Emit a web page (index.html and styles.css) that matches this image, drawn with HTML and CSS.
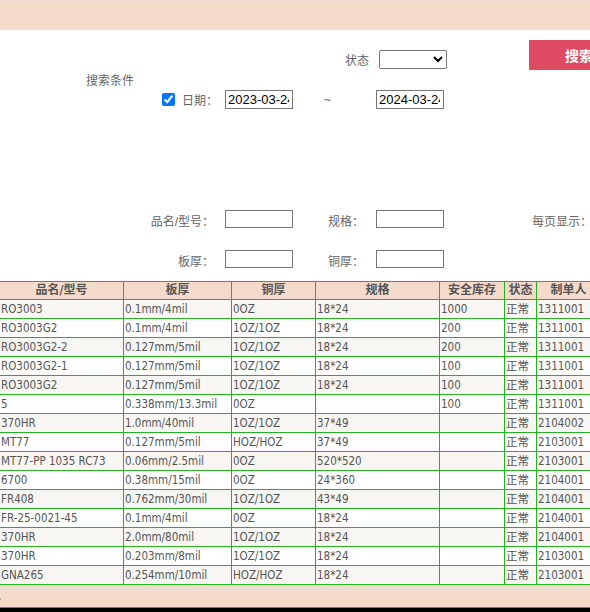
FILE: index.html
```html
<!DOCTYPE html>
<html lang="zh-CN">
<head>
<meta charset="utf-8">
<title>物料查询</title>
<link rel="stylesheet" href="styles.css">
</head>
<body>
<div class="page">
  <div class="topbar"></div>
  <div class="search">
    <div class="row r1">
      <span class="lbl lbl-state">状态</span>
      <select class="sel"><option></option><option>正常</option></select>
      <button class="btn" type="button">搜索</button>
    </div>
    <div class="row r2"><span class="lbl">搜索条件</span></div>
    <div class="row r3">
      <input type="checkbox" class="chk" checked>
      <span class="lbl date-lbl">日期：</span>
      <input class="txt tall" type="text" value="2023-03-24">
      <span class="lbl tilde">~</span>
      <input class="txt tall" type="text" value="2024-03-24">
    </div>
    <div class="row r4">
      <span class="lbl l1">品名/型号：</span>
      <input class="txt gap1" type="text">
      <span class="lbl l2">规格：</span>
      <input class="txt" type="text">
      <span class="lbl l3">每页显示：</span>
    </div>
    <div class="row r5">
      <span class="lbl l1">板厚：</span>
      <input class="txt gap1" type="text">
      <span class="lbl l2">铜厚：</span>
      <input class="txt" type="text">
    </div>
  </div>
  <table class="grid">
    <colgroup>
      <col class="c1"><col class="c2"><col class="c3"><col class="c4"><col class="c5"><col class="c6"><col class="c7">
    </colgroup>
    <thead>
      <tr><th>品名/型号</th><th>板厚</th><th>铜厚</th><th>规格</th><th>安全库存</th><th>状态</th><th>制单人</th></tr>
    </thead>
    <tbody>
      <tr><td>RO3003</td><td>0.1mm/4mil</td><td>0OZ</td><td>18*24</td><td>1000</td><td>正常</td><td>1311001</td></tr>
      <tr><td>RO3003G2</td><td>0.1mm/4mil</td><td>1OZ/1OZ</td><td>18*24</td><td>200</td><td>正常</td><td>1311001</td></tr>
      <tr><td>RO3003G2-2</td><td>0.127mm/5mil</td><td>1OZ/1OZ</td><td>18*24</td><td>200</td><td>正常</td><td>1311001</td></tr>
      <tr><td>RO3003G2-1</td><td>0.127mm/5mil</td><td>1OZ/1OZ</td><td>18*24</td><td>100</td><td>正常</td><td>1311001</td></tr>
      <tr><td>RO3003G2</td><td>0.127mm/5mil</td><td>1OZ/1OZ</td><td>18*24</td><td>100</td><td>正常</td><td>1311001</td></tr>
      <tr><td>5</td><td>0.338mm/13.3mil</td><td>0OZ</td><td></td><td>100</td><td>正常</td><td>1311001</td></tr>
      <tr><td>370HR</td><td>1.0mm/40mil</td><td>1OZ/1OZ</td><td>37*49</td><td></td><td>正常</td><td>2104002</td></tr>
      <tr><td>MT77</td><td>0.127mm/5mil</td><td>HOZ/HOZ</td><td>37*49</td><td></td><td>正常</td><td>2103001</td></tr>
      <tr><td>MT77-PP 1035 RC73</td><td>0.06mm/2.5mil</td><td>0OZ</td><td>520*520</td><td></td><td>正常</td><td>2103001</td></tr>
      <tr><td>6700</td><td>0.38mm/15mil</td><td>0OZ</td><td>24*360</td><td></td><td>正常</td><td>2104001</td></tr>
      <tr><td>FR408</td><td>0.762mm/30mil</td><td>1OZ/1OZ</td><td>43*49</td><td></td><td>正常</td><td>2104001</td></tr>
      <tr><td>FR-25-0021-45</td><td>0.1mm/4mil</td><td>0OZ</td><td>18*24</td><td></td><td>正常</td><td>2104001</td></tr>
      <tr><td>370HR</td><td>2.0mm/80mil</td><td>1OZ/1OZ</td><td>18*24</td><td></td><td>正常</td><td>2104001</td></tr>
      <tr><td>370HR</td><td>0.203mm/8mil</td><td>1OZ/1OZ</td><td>18*24</td><td></td><td>正常</td><td>2103001</td></tr>
      <tr><td>GNA265</td><td>0.254mm/10mil</td><td>HOZ/HOZ</td><td>18*24</td><td></td><td>正常</td><td>2103001</td></tr>
    </tbody>
  </table>
  <div class="foot"><span class="foot-mark">.</span></div>
  <div class="bottom"></div>
</div>
</body>
</html>
```
FILE: styles.css
```css
html, body {
  margin: 0;
  padding: 0;
  overflow: hidden;
  background: #fff;
}

.page {
  width: 590px;
  height: 612px;
  overflow: hidden;
  font-family: "DejaVu Sans Condensed", "DejaVu Sans", "Noto Sans CJK SC", sans-serif;
}

.topbar {
  height: 28px;
  background: #f4dbc9;
  border-top: 1px solid #ebe1d9;
  border-bottom: 1px solid #e5e0dc;
}

.row {
  display: flex;
  white-space: nowrap;
}

.row > * {
  flex-shrink: 0;
}

.lbl {
  font-family: "Liberation Sans", "Noto Sans CJK SC", sans-serif;
  font-size: 12px;
  color: #666;
}

.r1 {
  height: 40px;
  box-sizing: border-box;
  padding-top: 10px;
  align-items: flex-start;
}

.lbl-state {
  margin-left: 345px;
  margin-top: 12px;
  width: 34px;
  line-height: 19px;
}

.sel {
  margin: 10px 0 0 0;
  width: 68px;
  height: 19px;
  font-size: 13px;
  box-sizing: border-box;
}

.btn {
  margin: 0 0 0 82px;
  width: 100px;
  height: 30px;
  border: 0;
  padding: 0;
  background: #e04b64;
  color: #fff;
  font-family: "Noto Sans CJK SC", sans-serif;
  font-size: 14px;
  font-weight: bold;
}

.r2 {
  height: 20px;
  box-sizing: border-box;
  padding-top: 2px;
  line-height: 18px;
  padding-left: 86px;
}

.r3 {
  height: 19px;
  align-items: center;
}

.chk {
  margin: 0 0 0 162px;
  width: 13px;
  height: 13px;
}

.date-lbl {
  margin-left: 7px;
  width: 43px;
}

.tilde {
  margin-left: 31px;
  width: 52px;
}

.txt {
  width: 68px;
  height: 18px;
  box-sizing: border-box;
  border: 1px solid #767676;
  padding: 0 3px 0 2px;
  margin: 0;
  font-family: "Liberation Sans", sans-serif;
  font-size: 13px;
  color: #000;
  background: #fff;
}

.txt.tall {
  height: 19px;
}

.r4 {
  margin-top: 101px;
  height: 18px;
  align-items: center;
}

.r5 {
  margin-top: 22px;
  height: 18px;
  align-items: center;
}

.r4 .lbl,
.r5 .lbl {
  padding-top: 2px;
}

.l1 {
  width: 214px;
  text-align: right;
}

.gap1 {
  margin-left: 11px;
}

.l2 {
  margin-left: 35px;
  width: 48px;
}

.l3 {
  margin-left: 88px;
}

.grid {
  margin-top: 13px;
  margin-left: -1px;
  border-collapse: collapse;
  table-layout: fixed;
  width: 601px;
  color: #555;
}

.c1 { width: 124px; }
.c2 { width: 108px; }
.c3 { width: 84px; }
.c4 { width: 124px; }
.c5 { width: 65px; }
.c6 { width: 32px; }
.c7 { width: 64px; }

.grid th {
  background: #f4dbc9;
  border: 1px solid #22b422;
  height: 17px;
  line-height: 17px;
  padding: 0;
  font-family: "DejaVu Sans Condensed", "DejaVu Sans", "Noto Sans CJK SC", sans-serif;
  font-size: 12px;
  font-weight: bold;
  text-align: center;
  white-space: nowrap;
  overflow: hidden;
}

.grid td {
  border: 1px solid #22b422;
  height: 18px;
  line-height: 18px;
  padding: 0 1px;
  font-size: 11.5px;
  white-space: nowrap;
  overflow: hidden;
  background: #fff;
}

.grid tbody tr:nth-child(odd) td {
  background: #f7f6f2;
}

.foot {
  height: 22px;
  background: #f4dbc9;
  border-bottom: 1px solid #22b422;
  position: relative;
}

.foot-mark {
  position: absolute;
  left: -2px;
  top: 4px;
  font-size: 12px;
  color: #555;
}

.bottom {
  height: 5px;
  background: #000;
}
```
